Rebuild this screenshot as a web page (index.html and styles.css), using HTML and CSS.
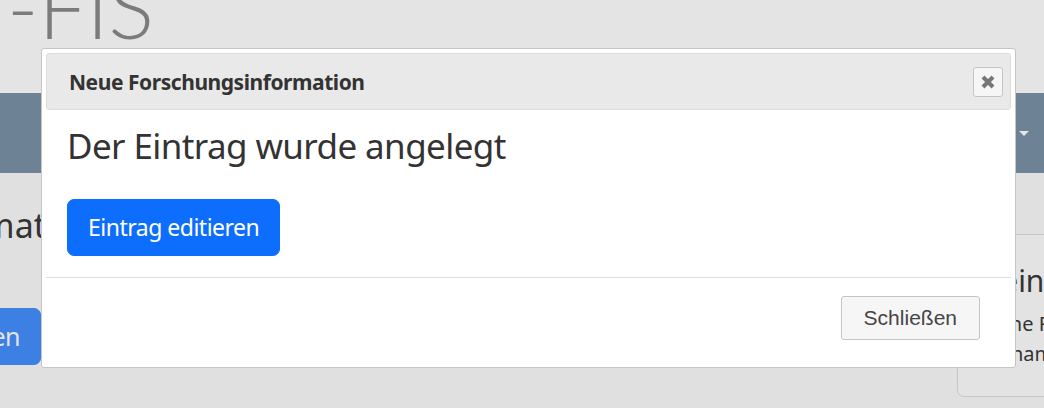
FILE: index.html
```html
<!DOCTYPE html>
<html lang="de">
<head>
<meta charset="utf-8">
<title>FIS</title>
<link rel="stylesheet" href="styles.css">
</head>
<body>
<div class="page">
  <header class="masthead">
    <div class="logo">-FIS</div>
  </header>
  <nav class="navbar">
    <span class="caret"></span>
  </nav>
  <main class="main">
    <section class="side">
      <h2 class="side-title">Informationen</h2>
      <button class="btn-primary side-btn" type="button">Hinzufügen</button>
    </section>
    <aside class="card">
      <h3 class="card-title">Mein</h3>
      <p class="card-line">Keine F</p>
      <p class="card-line">Vornam</p>
    </aside>
  </main>
</div>

<div class="dialog" role="dialog">
  <div class="dialog-titlebar">
    <span class="dialog-title">Neue Forschungsinformation</span>
    <button class="dialog-close" type="button" aria-label="Schließen">
      <svg width="14" height="14" viewBox="0 0 14 14"><path d="M2 2 L12 12 M12 2 L2 12" stroke="#777" stroke-width="4" stroke-linecap="butt" fill="none"/></svg>
    </button>
  </div>
  <div class="dialog-content">
    <h2 class="dialog-heading">Der Eintrag wurde angelegt</h2>
    <button class="btn-primary dialog-btn" type="button">Eintrag editieren</button>
  </div>
  <div class="dialog-buttonpane">
    <button class="btn-default" type="button">Schließen</button>
  </div>
</div>
</body>
</html>
```
FILE: styles.css
```css
* { box-sizing: border-box; }
html, body { margin: 0; padding: 0; }
body {
  width: 1044px;
  height: 408px;
  overflow: hidden;
  background: #e0e0e0;
  font-family: "Noto Sans", "Open Sans", sans-serif;
  color: #333;
  position: relative;
}
.page { display: flex; flex-direction: column; }

.masthead {
  height: 93px;
  background: #e4e4e4;
  overflow: hidden;
}
.logo {
  font-family: "Lato", "Open Sans", sans-serif;
  font-weight: 300;
  font-size: 85px;
  line-height: 85px;
  color: #7b7b7b;
  margin-top: -36px;
  margin-left: 7px;
}

.navbar {
  height: 80px;
  background: #6e8296;
  display: flex;
  align-items: center;
  justify-content: flex-end;
  padding-right: 15px;
}
.caret {
  width: 0; height: 0;
  border-left: 5px solid transparent;
  border-right: 5px solid transparent;
  border-top: 5px solid #e6e6e6;
}

.main {
  display: flex;
  justify-content: space-between;
  align-items: flex-start;
  height: 235px;
}
.side {
  display: flex;
  flex-direction: column;
  align-items: flex-end;
  width: 241px;
  margin-left: -200px;
}
.side-title {
  align-self: flex-start;
  margin: 32px 0 0 104px;
  font-weight: 400;
  font-size: 34px;
  line-height: 40px;
  color: #333;
  white-space: nowrap;
}
.btn-primary {
  font-family: "Noto Sans", "Open Sans", sans-serif;
  background: #0d6efd;
  color: #fff;
  border: 1px solid #0d6efd;
  border-radius: 7px;
  font-size: 23px;
  letter-spacing: -0.5px;
  line-height: 33px;
  padding: 11px 20px;
  cursor: pointer;
}
.side-btn {
  margin-top: 63px;
  background: #3c80e4;
  border-color: #3c80e4;
  color: #e4e4e4;
  font-size: 25px;
}

.card {
  margin-top: 61px;
  width: 120px;
  height: 163px;
  margin-right: -33px;
  background: #e3e3e3;
  border: 1px solid #c6c6c6;
  border-radius: 7px;
  padding: 28px 0 0 16px;
}
.card-title {
  margin: 0;
  font-weight: 400;
  font-size: 30px;
  line-height: 36px;
  white-space: nowrap;
  color: #333;
}
.card-line {
  margin: 10px 0 0 7px;
  font-size: 20px;
  line-height: 30px;
  white-space: nowrap;
  color: #333;
}
.card-line + .card-line { margin-top: 0; margin-left: 5px; }

/* dialog */
.dialog {
  position: absolute;
  left: 41px;
  top: 48px;
  width: 975px;
  height: 320px;
  background: #fff;
  border: 1px solid #c5c5c5;
  border-radius: 3px;
  padding: 4px;
  display: flex;
  flex-direction: column;
}
.dialog-titlebar {
  height: 57px;
  flex: none;
  background: #e9e9e9;
  border: 1px solid #dddddd;
  border-radius: 3px;
  display: flex;
  align-items: center;
  justify-content: space-between;
  padding: 0 7px 0 22px;
}
.dialog-title {
  font-weight: 700;
  font-size: 21px;
  letter-spacing: -0.45px;
  color: #333;
  white-space: nowrap;
}
.dialog-close {
  width: 30px;
  height: 30px;
  margin-top: 1px;
  background: #f6f6f6;
  border: 1px solid #c5c5c5;
  border-radius: 3px;
  padding: 0;
  display: flex;
  align-items: center;
  justify-content: center;
}
.dialog-content {
  flex: none;
  height: 167px;
  padding: 0 21px;
  display: flex;
  flex-direction: column;
  align-items: flex-start;
}
.dialog-heading {
  margin: 14.7px 0 0;
  font-weight: 400;
  font-size: 35px;
  letter-spacing: -0.6px;
  line-height: 42px;
  color: #333;
}
.dialog-btn { margin-top: 32.3px; }
.dialog-buttonpane {
  flex: 1;
  border-top: 1px solid #dddddd;
  display: flex;
  justify-content: flex-end;
  align-items: flex-start;
  padding: 18px 31px 0 0;
}
.btn-default {
  font-family: "Liberation Sans", Arial, sans-serif;
  font-size: 21px;
  line-height: 24px;
  padding: 9px 22px;
  height: 44px;
  background: #f6f6f6;
  color: #454545;
  border: 1px solid #c5c5c5;
  border-radius: 3px;
}
```
